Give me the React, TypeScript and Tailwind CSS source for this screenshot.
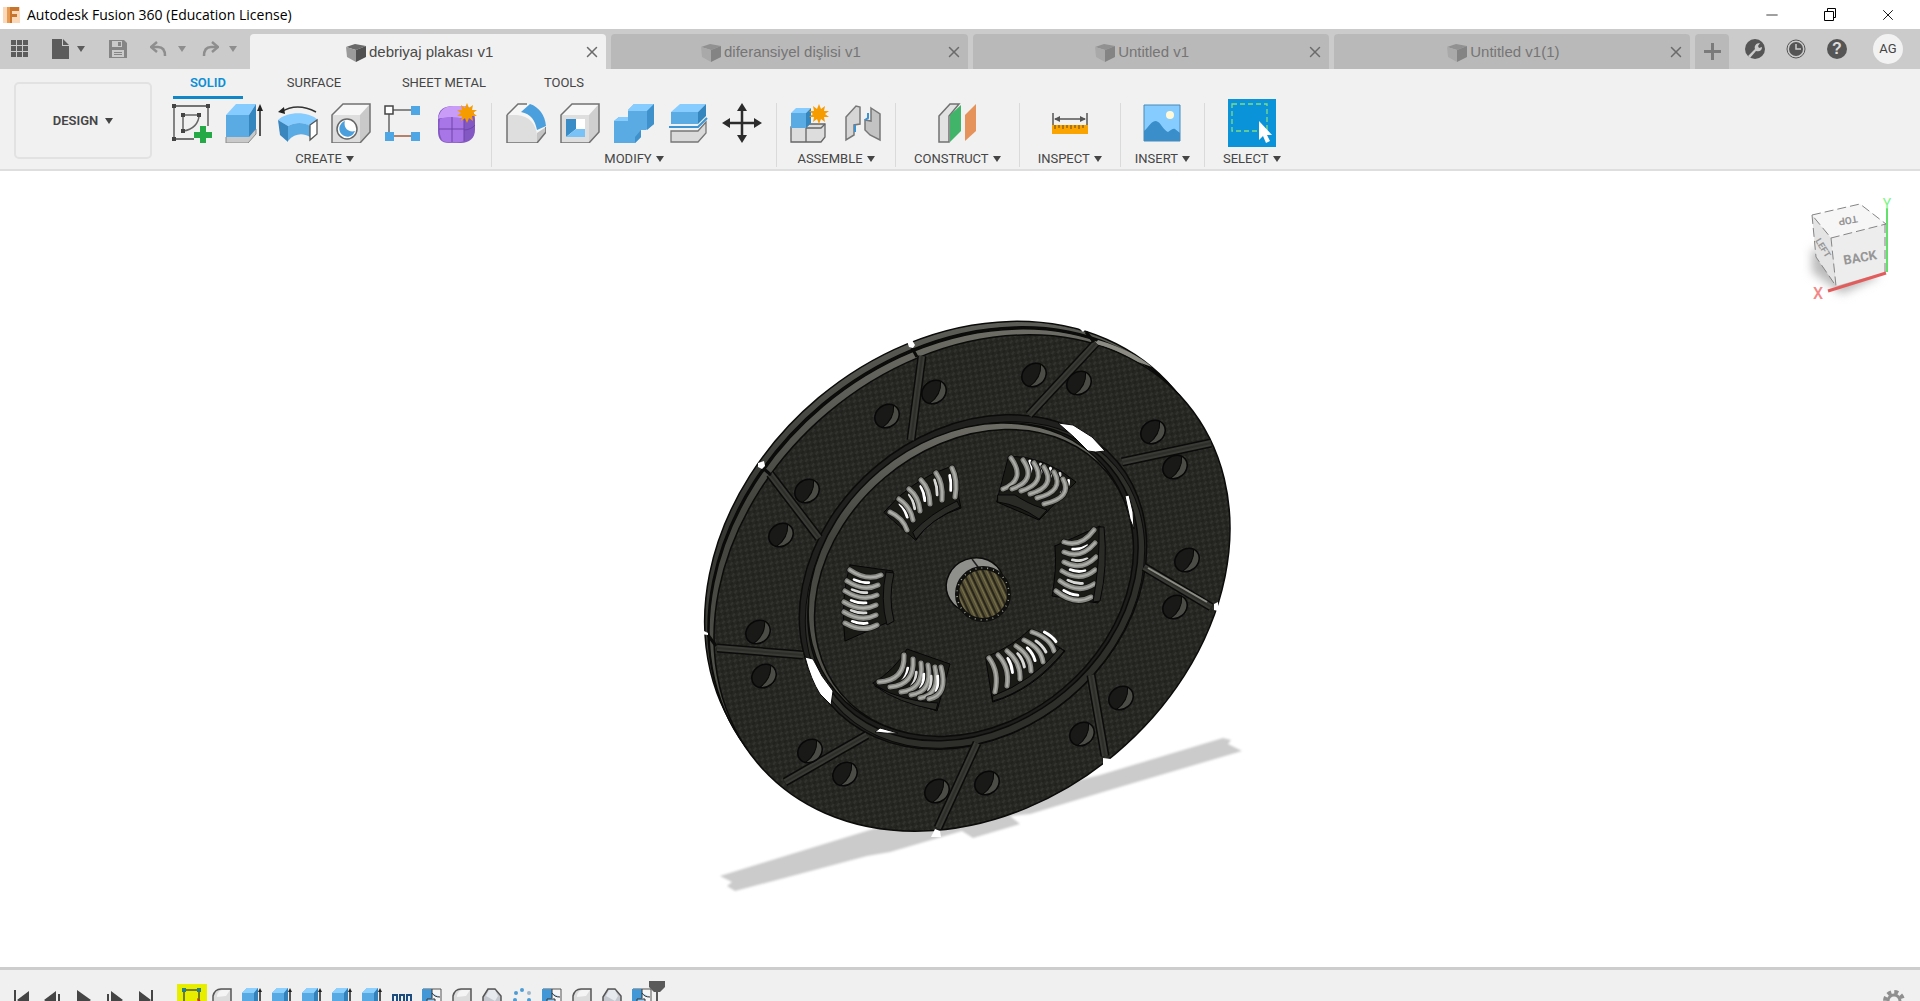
import type { ReactNode } from 'react';
import { Minus, X } from 'lucide-react';

type Point = [number, number];

const documents = [
  { name: 'debriyaj plakası v1', active: true },
  { name: 'diferansiyel dişlisi v1', active: false },
  { name: 'Untitled v1', active: false },
  { name: 'Untitled v1(1)', active: false },
];

const workspaces = [
  { name: 'SOLID', className: 'w-[70px] text-[#0b8fd6] font-semibold border-[#1287c8]' },
  { name: 'SURFACE', className: 'w-[70px] ml-[36px] border-transparent' },
  { name: 'SHEET METAL', className: 'w-[100px] ml-[45px] border-transparent' },
  { name: 'TOOLS', className: 'w-[60px] ml-[40px] border-transparent' },
];

const Caret = ({ className = '' }: { className?: string }) => (
  <svg viewBox="0 0 8 6" className={`w-2 h-[6px] shrink-0 ${className}`}>
    <path d="M0 0h8L4 6z" fill="currentColor" />
  </svg>
);

const Icon = ({ children }: { children: ReactNode }) => (
  <svg viewBox="0 0 40 40" className="w-10 h-10" fill="none">
    {children}
  </svg>
);

const Star = () => (
  <path
    d="M10 0l2 5 4-3-1 5 5 0-4 3 4 3-5 0 1 5-4-3-2 5-2-5-4 3 1-5-5 0 4-3-4-3 5 0-1-5 4 3z"
    fill="#f79c00"
  />
);

const SketchIcon = () => (
  <Icon>
    <path d="M2 3h32M2 3v33M36 3v20M2 36h20" stroke="#4a4a4a" strokeWidth="1.3" />
    <path d="M11 12v16M11 12h16M27 12c0 8-6 15-16 16" stroke="#666" strokeWidth="1.5" />
    <path d="M0 1h4v4H0zM34 1h4v4h-4zM0 34h4v4H0zM9 10h4v4H9zM25 10h4v4h-4zM9 26h4v4H9z" fill="#444" />
    <path d="M28 23h6v6h6v6h-6v6h-6v-6h-6v-6h6z" fill="#25a846" />
  </Icon>
);

const ExtrudeIcon = () => (
  <Icon>
    <path d="M1 34l9-8h21v5l-8 9H1z" fill="#c9c9c9" stroke="#8a8a8a" />
    <path d="M1 12h23v22H1z" fill="#5aaae4" />
    <path d="M1 12L11 1h20l-7 11z" fill="#87ccff" />
    <path d="M24 12l7-11v25l-7 8z" fill="#3585bf" />
    <path d="M35 33V6" stroke="#222" strokeWidth="1.5" />
    <path d="M32 8l3-7 3 7z" fill="#222" />
  </Icon>
);

const RevolveIcon = () => (
  <Icon>
    <path d="M3 9Q19-1 38 9" stroke="#333" strokeWidth="1.5" />
    <path d="M0 9l6-5 1 7z" fill="#222" />
    <path d="M0 17C9 8 31 8 40 17l-9 6c-5-4-14-4-21 0z" fill="#87ccff" />
    <path d="M0 17l10 6v16L2 32z" fill="#3985bd" />
    <path d="M10 23c7-4 16-4 22 0v11c-7-4-15-4-22 4z" fill="#5aaae4" />
    <path d="M32 22l7-5v14l-7 6z" fill="#fff" stroke="#555" strokeWidth="1.3" />
  </Icon>
);

const HoleIcon = () => (
  <Icon>
    <path d="M1 12L12 1h27L29 12z" fill="#f7f7f7" />
    <path d="M29 12L39 1v28L29 40z" fill="#c9c9c9" />
    <path d="M1 12h28v28H1z" fill="#dedede" />
    <path d="M1 12L12 1h27v28L29 40H1z" stroke="#717171" strokeWidth="1.5" />
    <circle cx="16" cy="26" r="10" fill="#fff" stroke="#666" strokeWidth="1.5" />
    <path d="M14 18a8 8 0 1 0 10 10c-7 2-12-4-10-10z" fill="#4a9fdc" />
  </Icon>
);

const PatternIcon = () => (
  <Icon>
    <path d="M5 7v24M5 7h26" stroke="#666" strokeWidth="1.5" />
    <path d="M5 33h26" stroke="#a25b3c" strokeWidth="1.5" />
    <path d="M1 3h8v8H1z" fill="#fff" stroke="#444" strokeWidth="1.5" />
    <path d="M27 3h9v9h-9zM1 29h9v9H1zM27 29h9v9h-9z" fill="#4fa6e4" />
  </Icon>
);

const FormIcon = () => (
  <Icon>
    <path d="M1 16C1 6 8 3 16 3h12c7 1 10 7 10 14v10c0 8-6 13-14 13H12C4 40 1 36 1 28z" fill="#8458c2" />
    <path d="M1 16C3 6 9 3 16 3h12c5 1 8 4 9 7-3 3-7 5-11 5H7c-3 0-5 0-6 1z" fill="#c99cf8" />
    <path d="M3 16c7-3 17-2 24 0v22c-5 2-16 2-21 0-4-4-4-15-3-22z" fill="#a876e6" />
    <path d="M15 14v25M2 26h25M27 16v22M27 27c4 0 9-2 11-5" stroke="#6d45a8" />
    <g transform="translate(20 0)">
      <Star />
    </g>
  </Icon>
);

const FilletIcon = () => (
  <Icon>
    <path d="M1 12L12 1h9c12 2 19 12 19 26l-9 13H1z" fill="#f6f6f6" />
    <path d="M31 30l9-6v5l-9 11z" fill="#c4c4c4" />
    <path d="M1 12h10c12 1 19 9 20 20v8H1z" fill="#dedede" />
    <path d="M1 12L12 1h9M40 24v5l-9 11H1V12" stroke="#717171" strokeWidth="1.5" />
    <path d="M15 9l9-8c9 3 15 11 16 22l-9 4C29 17 25 11 15 9z" fill="#4a9fdc" />
  </Icon>
);

const ShellIcon = () => (
  <Icon>
    <path d="M1 12L12 1h27L29 12z" fill="#f7f7f7" />
    <path d="M29 12L39 1v28L29 40z" fill="#cfcfcf" />
    <path d="M1 12h28v28H1z" fill="#dedede" />
    <path d="M1 12L12 1h27v28L29 40H1z" stroke="#717171" strokeWidth="1.5" />
    <path d="M6 16h19v18H6z" fill="#fff" />
    <path d="M6 16h10v10L6 34z" fill="#3a8cc6" />
    <path d="M6 34l10-8h9v8z" fill="#78c2f7" />
  </Icon>
);

const CombineIcon = () => (
  <Icon>
    <path d="M0 18l5-4h9V7l6-6h20v20l-8 6h-5v7l-6 6H0z" fill="#5aaae4" />
    <path d="M14 7l6-6h20l-7 7H14zM0 18l5-4h9v4z" fill="#87ccff" />
    <path d="M33 8l7-7v20l-7 6zM21 34l6-7v7l-6 6z" fill="#3f91cc" />
  </Icon>
);

const SplitIcon = () => (
  <Icon>
    <path d="M3 9l9-8h26l-8 8z" fill="#87ccff" />
    <path d="M3 9h27v12H3z" fill="#5aaae4" />
    <path d="M30 9l8-8v12l-8 8z" fill="#3585bf" />
    <path d="M1 24h29l9-9" stroke="#3a93d3" strokeWidth="2" />
    <path d="M3 28h27l8-9v11l-8 9H3z" fill="#dadada" stroke="#777" strokeWidth="1.3" />
  </Icon>
);

const MoveIcon = () => (
  <Icon>
    <path d="M20 5v30M5 20h30" stroke="#2b2b2b" strokeWidth="2.5" />
    <path d="M15 8l5-8 5 8zM15 32l5 8 5-8zM8 15l-8 5 8 5zM32 15l8 5-8 5z" fill="#2b2b2b" />
  </Icon>
);

const ComponentIcon = () => (
  <Icon>
    <path d="M2 24h15l3-3h16v13l-4 5H2z" fill="#ddd" stroke="#666" strokeWidth="1.3" />
    <path d="M17 25v14M17 25h15l4-4" stroke="#666" strokeWidth="1.3" />
    <path d="M2 10h15v15H2z" fill="#5aaae4" />
    <path d="M2 10l5-5h15l-5 5z" fill="#87ccff" />
    <path d="M17 10l5-5v15l-5 5z" fill="#3585bf" />
    <g transform="translate(20 1)">
      <Star />
    </g>
  </Icon>
);

const JointIcon = () => (
  <Icon>
    <path d="M3 14L13 3l4 1v17l-6 1v10l-8 5z" fill="#d6d6d6" stroke="#777" strokeWidth="1.5" />
    <path d="M28 5l9 6v26l-10-5-5-5V17l6 1z" fill="#c3c3c3" stroke="#777" strokeWidth="1.5" />
    <path d="M12 22v7M22 17l3-2v-5" stroke="#3a93d3" strokeWidth="2" />
  </Icon>
);

const PlaneIcon = () => (
  <Icon>
    <path d="M2 13L13 1h9L12 13v26H2z" fill="#e2e2e2" stroke="#717171" strokeWidth="1.5" />
    <path d="M13 12L24 2v26L13 39z" fill="#41b469" />
    <path d="M28 12L39 1v27L28 38z" fill="#e5925b" />
  </Icon>
);

const MeasureIcon = () => (
  <Icon>
    <path d="M3 10v12M37 10v12M5 16h30" stroke="#555" strokeWidth="1.5" />
    <path d="M4 16l6-3v6zM36 16l-6-3v6z" fill="#555" />
    <path d="M2 22h36v9H2z" fill="#f9a400" />
    <path d="M5 22v4M9 22v3M13 22v4M17 22v3M21 22v4M25 22v3M29 22v4M33 22v3" stroke="#6b4700" />
  </Icon>
);

const InsertIcon = () => (
  <Icon>
    <path d="M2 2h36v36H2z" fill="#87ccff" />
    <circle cx="28" cy="12" r="4" fill="#fff9d8" />
    <path d="M2 28c5-4 7-10 12-10 5 1 7 9 12 11 3-2 5-4 7-3l5 4v8H2z" fill="#3a8fcb" />
    <path d="M2 2h36v36H2z" stroke="#4689ba" />
  </Icon>
);

const SelectIcon = () => (
  <svg viewBox="0 0 48 48" className="w-12 h-12 -my-1" fill="none">
    <path d="M0 0h48v48H0z" fill="#0a93d9" />
    <path d="M4 5h35v27H4z" stroke="#80dc84" strokeWidth="1.3" strokeDasharray="5 3" />
    <path d="M31 22v19l4-4 3 7 4-2-3-6h5z" fill="#fff" />
  </svg>
);

const groups = [
  { name: 'CREATE', className: 'px-[14px] gap-[13px]', icons: [SketchIcon, ExtrudeIcon, RevolveIcon, HoleIcon, PatternIcon, FormIcon] },
  { name: 'MODIFY', className: 'px-[14px] gap-[14px]', icons: [FilletIcon, ShellIcon, CombineIcon, SplitIcon, MoveIcon] },
  { name: 'ASSEMBLE', className: 'px-[12px] gap-[14px]', icons: [ComponentIcon, JointIcon] },
  { name: 'CONSTRUCT', className: 'px-[18px]', icons: [PlaneIcon] },
  { name: 'INSPECT', className: 'px-[18px]', icons: [MeasureIcon] },
  { name: 'INSERT', className: 'px-[18px]', icons: [InsertIcon] },
  { name: 'SELECT', className: 'px-[18px]', icons: [SelectIcon] },
];

const CubeIcon = () => (
  <svg viewBox="0 0 20 20" className="w-5 h-5 shrink-0">
    <path d="M0 4l9-3 11 2-10 4z" fill="#6a6a6a" />
    <path d="M0 4l10 3v12L1 14z" fill="#9a9a9a" />
    <path d="M10 7l10-4v11l-10 5z" fill="#505050" />
  </svg>
);

const TitleBar = () => (
  <header className="flex items-center h-[29px] bg-white shrink-0">
    <svg viewBox="0 0 18 18" className="w-[18px] h-[18px] ml-[3px]">
      <path d="M0 1h17v16H0z" fill="#fbd9b8" />
      <path d="M4 1h12v4H9v3h5v3H9v6H4z" fill="#c9742d" />
      <path d="M4 1h3v16H4z" fill="#e69a52" />
    </svg>
    <h1 className="ml-[6px] font-['Open_Sans','Noto_Sans',sans-serif] text-[14px] leading-5 text-black">Autodesk Fusion 360 (Education License)</h1>
    <div className="ml-auto flex items-center gap-[41px] pr-[23px] text-black">
      <button aria-label="Minimize"><Minus className="w-[18px] h-[18px]" strokeWidth={1} /></button>
      <button aria-label="Restore">
        <svg viewBox="0 0 16 16" className="w-4 h-4" fill="none" stroke="currentColor">
          <path d="M2.500 4.500h9v9h-9zM5.500 4.500v-3h8v9h-2" />
        </svg>
      </button>
      <button aria-label="Close"><X className="w-[18px] h-[18px]" strokeWidth={1.2} /></button>
    </div>
  </header>
);

const QuickAccess = () => (
  <div className="flex items-center w-[250px] shrink-0 h-full pl-[11px] text-[#5c5c5c]">
    <button aria-label="Data panel">
      <svg viewBox="0 0 18 18" className="w-[18px] h-[18px]" fill="currentColor">
        <path d="M0 0h5v5H0zM6 0h5v5H6zM12 0h5v5h-5zM0 6h5v5H0zM6 6h5v5H6zM12 6h5v5h-5zM0 12h5v5H0zM6 12h5v5H6zM12 12h5v5h-5z" />
      </svg>
    </button>
    <button aria-label="File" className="flex items-center gap-2 ml-[23px]">
      <svg viewBox="0 0 17 20" className="w-[17px] h-5" fill="currentColor">
        <path d="M0 0h10v7h7v13H0zM11 0l6 6h-6z" />
      </svg>
      <Caret />
    </button>
    <button aria-label="Save" className="ml-[24px] text-[#858585]">
      <svg viewBox="0 0 18 18" className="w-[18px] h-[18px]">
        <path d="M0 0h15l3 3v15H0z" fill="currentColor" />
        <path d="M3 1h10v6H3zM3 10h12v7H3z" fill="#cbcbcb" />
        <path d="M9 2h3v4H9zM5 12h8v1H5zM5 14h8v1H5z" fill="currentColor" />
      </svg>
    </button>
    <button aria-label="Undo" className="flex items-center gap-[11px] ml-[23px] text-[#8e8e8e]">
      <svg viewBox="0 0 17 16" className="w-[17px] h-4" fill="none">
        <path d="M2 6h6c5 0 7 3 7 9" stroke="currentColor" strokeWidth="2.500" />
        <path d="M7 1L1 6l6 5" stroke="currentColor" strokeWidth="2.500" />
      </svg>
      <Caret />
    </button>
    <button aria-label="Redo" className="flex items-center gap-[10px] ml-[16px] text-[#8e8e8e]">
      <svg viewBox="0 0 17 16" className="w-[17px] h-4" fill="none">
        <path d="M15 6H9c-5 0-7 3-7 9" stroke="currentColor" strokeWidth="2.500" />
        <path d="M10 1l6 5-6 5" stroke="currentColor" strokeWidth="2.500" />
      </svg>
      <Caret />
    </button>
  </div>
);

const TabBar = () => (
  <nav className="flex items-end h-10 bg-[#cbcbcb] shrink-0">
    <QuickAccess />
    <div className="flex flex-1 gap-[5px] h-[35px]">
      {documents.map((doc) => (
        <div
          key={doc.name}
          className={`flex flex-1 items-center rounded-t-[4px] text-[15px] ${doc.active ? 'bg-[#f1f1f1] text-[#4a4a4a]' : 'bg-[#b9b9b9] text-[#757575]'}`}
        >
          <button className="flex flex-1 items-center justify-center gap-[3px] pl-[6px] pt-[2px]">
            <span className={doc.active ? '' : 'opacity-50'}><CubeIcon /></span>
            {doc.name}
          </button>
          <button aria-label={`Close ${doc.name}`} className="pr-[5px] text-[#6b6b6b]">
            <X className="w-[18px] h-[18px]" strokeWidth={2} />
          </button>
        </div>
      ))}
      <button aria-label="New tab" className="flex items-center justify-center w-[34px] rounded-t-[4px] bg-[#b9b9b9]">
        <svg viewBox="0 0 17 17" className="w-[17px] h-[17px]"><path d="M7 0h3v7h7v3h-7v7H7v-7H0V7h7z" fill="#7b7b7b" /></svg>
      </button>
    </div>
    <div className="flex items-center h-full w-[191px] shrink-0 pl-[16px] text-[#555]">
      <button aria-label="Extensions">
        <svg viewBox="0 0 20 20" className="w-5 h-5">
          <circle cx="10" cy="10" r="10" fill="currentColor" />
          <path d="M3 17l7-7c-1-3 1-6 5-6l-2 3 1 2 3-1c0 4-3 5-6 4l-6 7z" fill="#cbcbcb" />
        </svg>
      </button>
      <button aria-label="Job status" className="ml-[21px]">
        <svg viewBox="0 0 20 20" className="w-5 h-5">
          <circle cx="10" cy="10" r="9" fill="none" stroke="currentColor" />
          <circle cx="10" cy="10" r="7" fill="currentColor" />
          <path d="M10 5v5h5" fill="none" stroke="#cbcbcb" strokeWidth="1.500" />
        </svg>
      </button>
      <button aria-label="Help" className="ml-[21px] flex items-center justify-center w-5 h-5 rounded-full bg-[#555] text-[#ddd] text-[16px] leading-5 font-bold">?</button>
      <button className="ml-[26px] flex items-center justify-center w-[30px] h-[30px] rounded-full bg-[#f2f2f2] font-['Roboto',sans-serif] text-[13px] text-[#444]">AG</button>
    </div>
  </nav>
);

const Toolbar = () => (
  <section className="flex shrink-0 h-[102px] bg-[#f1f1f1] border-b-2 border-[#dedede] font-['Roboto','Liberation_Sans',sans-serif] text-[13px] leading-4 text-[#454545]">
    <button className="flex items-center justify-center gap-[7px] w-[138px] h-[77px] ml-[14px] mt-[13px] border-2 border-[#e2e2e2] rounded-[5px] font-semibold">
      DESIGN <Caret />
    </button>
    <div className="ml-[6px]">
      <div className="flex h-[30px] pl-[15px]">
        {workspaces.map((space) => (
          <button key={space.name} className={`h-[30px] border-b-3 ${space.className}`}>{space.name}</button>
        ))}
      </div>
      <div className="flex pt-[4px]">
        {groups.map((group) => (
          <div key={group.name} className="flex flex-col items-center h-[64px] border-r border-[#dadada] last:border-0">
            <div className={`flex ${group.className}`}>
              {group.icons.map((Drawing, index) => (
                <button key={index} aria-label={`${group.name} ${index + 1}`}><Drawing /></button>
              ))}
            </div>
            <button className={`flex items-center gap-1 mt-[8px] ${group.name === 'INSERT' ? 'px-[14px]' : 'px-[18px]'}`}>{group.name} <Caret /></button>
          </div>
        ))}
      </div>
    </div>
  </section>
);

const holes: Point[] = [
  [887, 417], [934, 393], [807, 492], [781, 536], [1034, 376], [1079, 384],
  [1153, 433], [1175, 468], [1187, 561], [758, 633], [764, 677], [810, 752],
  [845, 775], [937, 792], [987, 784], [1082, 735], [1121, 699], [1175, 608],
];

const slots: [Point, Point][] = [
  [[922, 357], [911, 441]],
  [[770, 475], [819, 539]],
  [[717, 649], [803, 656]],
  [[785, 783], [867, 736]],
  [[938, 829], [977, 744]],
  [[1105, 757], [1091, 676]],
  [[1211, 608], [1144, 568]],
  [[1211, 444], [1122, 463]],
  [[1096, 344], [1029, 416]],
];

const notches = [
  'M907 342l5-1 3 5-2 3-4-1z',
  'M758 464l6-2 1 5-3 3-4-2z',
  'M700 630l8 4v2l-8-1z',
  'M1079 329l8 0-4 4z',
  'M1218 603l-4 2 0 6 4 1z',
  'M1103 766l0-7 8 1-4 8z',
  'M931 838l4-8 5 2 1 6z',
];

const windows = [
  'M1058 424l15 2 19 12 13 14q-10 2-17 0-12-13-30-28z',
  'M1125 497l4-1 4 17 1 17-4-10z',
  'M805 658l8 2 9 17 11 15-2 14-11-11q-9-14-15-37z',
  'M880 729l18 5q-10 1-23-1z',
];

const springs: { box: string; pad: string; first: [Point, Point]; last: [Point, Point]; bow: Point; arch: Point; gap: Point }[] = [
  { box: 'M884 513Q912 480 952 467L961 509Q930 519 916 541z', pad: 'M913 533Q931 514 957 502L960 508Q931 520 916 540z', first: [[890, 513], [907, 531]], last: [[952, 469], [955, 498]], bow: [3, -2], arch: [-6, -6], gap: [-5, 0] },
  { box: 'M1009 457Q1045 457 1076 483L1039 521 997 503z', pad: 'M998 496l17 0q14 9 24 12l8 3-8 9q-20-14-41-17z', first: [[1011, 459], [1003, 490]], last: [[1063, 480], [1044, 505]], bow: [13, 4], arch: [2, -4], gap: [3, -6] },
  { box: 'M1055 547L1100 527Q1107 565 1098 604L1052 597Q1057 570 1055 547z', pad: 'M1099 528l5 0q4 40-4 74l-7 1q7-38 6-75z', first: [[1064, 543], [1094, 531]], last: [[1056, 592], [1091, 598]], bow: [1, 8], arch: [3, 0], gap: [1, -5] },
  { box: 'M986 658Q1015 646 1030 630L1065 652Q1035 690 993 703z', pad: 'M993 697q40-15 67-48l4 3q-32 39-71 50z', first: [[989, 659], [995, 693]], last: [[1032, 633], [1054, 652]], bow: [5, -2], arch: [1, 4], gap: [5, -3] },
  { box: 'M873 684Q894 672 907 650L950 665 937 712 897 699z', pad: 'M875 687q30 16 63 17l-2 7q-38-7-61-24z', first: [[904, 656], [879, 683]], last: [[941, 668], [929, 700]], bow: [9, 8], arch: [2, 3], gap: [-5, 1] },
  { box: 'M850 566L893 572Q886 600 893 621L845 642Q840 600 850 566z', pad: 'M886 573l8 1q-6 25 0 48l-7 4q-7-26-1-53z', first: [[850, 571], [881, 576]], last: [[845, 624], [877, 626]], bow: [1, 6], arch: [-3, 0], gap: [0, -5] },
];

const Spring = ({ box, pad, first, last, bow, arch, gap }: (typeof springs)[number]) => {
  const coils = Array.from({ length: 6 }, (_, i) => {
    const t = i / 5;
    const lift = 4 * t * (1 - t);
    const at = (end: 0 | 1, axis: 0 | 1) => Math.round(first[end][axis] + (last[end][axis] - first[end][axis]) * t + arch[axis] * lift);
    const [x1, y1, x2, y2] = [at(0, 0), at(0, 1), at(1, 0), at(1, 1)];
    return `M${x1} ${y1}Q${(x1 + x2) / 2 + bow[0] * 1.5} ${(y1 + y2) / 2 + bow[1] * 1.5} ${x2} ${y2}`;
  });
  return (
    <g fill="none" strokeLinecap="round">
      <path d={box} fill="#1a1a17" stroke="#060606" />
      {coils.map((d, i) => (
        <g key={d}>
          {i > 0 && (
            <path d={d} stroke={i % 2 ? '#ffffff' : '#d8d8d6'} strokeWidth="3" strokeDasharray="15 40" strokeDashoffset="-8" transform={`translate(${gap[0]} ${gap[1]})`} />
          )}
          <path d={d} stroke="#161614" strokeWidth="7" />
          <path d={d} stroke="#868682" strokeWidth="5" />
          <path d={d} stroke="#adada9" strokeWidth="2" />
        </g>
      ))}
      <path d={pad} fill="#2a2a27" stroke="#080808" />
    </g>
  );
};

const ClutchPlate = () => (
  <svg viewBox="675 240 570 660" className="w-[570px] h-[660px]">
    <defs>
      <pattern id="weave" width="8" height="8" patternUnits="userSpaceOnUse" patternTransform="rotate(-14)">
        <path d="M0 0h8v8H0z" fill="#262623" />
        <path d="M0 1h4v2H0zM4 5h4v2H4z" fill="#31312d" />
        <path d="M4 1h4v2H4zM0 5h4v2H0z" fill="#21211e" />
      </pattern>
      <linearGradient id="rim" x1="0" y1="1" x2="1" y2="0">
        <stop offset="0" stopColor="#6c6c65" />
        <stop offset="0.300" stopColor="#54544d" />
        <stop offset="0.600" stopColor="#43433e" />
        <stop offset="1" stopColor="#85857d" />
      </linearGradient>
      <linearGradient id="backRim" x1="0" y1="1" x2="1" y2="0">
        <stop offset="0" stopColor="#5c5c55" />
        <stop offset="0.400" stopColor="#3e3e3a" />
        <stop offset="0.600" stopColor="#353532" />
        <stop offset="1" stopColor="#74746c" />
      </linearGradient>
      <pattern id="spline" width="6" height="6" patternUnits="userSpaceOnUse" patternTransform="rotate(-25)">
        <path d="M0 0h6v6H0z" fill="#575135" />
        <path d="M0 0h2v6H0z" fill="#28251a" />
        <path d="M4 0h1v6H4z" fill="#777049" />
      </pattern>
      <filter id="soft"><feGaussianBlur stdDeviation="1" /></filter>
    </defs>
    <path
      d="M720 877L873 830 1100 776 1223 739 1231 741 1228 745 1242 752 1113 790 1030 815 1010 817 1020 825 973 839 962 832 890 853 867 857 735 892 727 887 732 883z"
      fill="#cbcbcb"
      filter="url(#soft)"
    />
    <g stroke="#0b0b0a" strokeWidth="1.500">
      <ellipse rx="278" ry="222" transform="translate(961 569) rotate(-40)" fill="url(#backRim)" />
      <ellipse rx="279" ry="222" transform="translate(965 575) rotate(-40)" fill="#0f0f0e" />
      <ellipse rx="279" ry="222" transform="translate(966 577) rotate(-40)" fill="url(#rim)" />
      <ellipse rx="280" ry="223" transform="translate(972 584) rotate(-40)" fill="url(#weave)" />
    </g>
    <path d="M1098 341Q1132 351 1152 368L1138 363Q1112 348 1095 345z" fill="#8c8c84" />
    <g stroke="#0b0b0a">
      <ellipse rx="188" ry="151" transform="translate(973 583) rotate(-40)" fill="#20201e" strokeWidth="1.500" />
      <ellipse rx="184" ry="147" transform="translate(975 586) rotate(-40)" fill="#2e2e2b" strokeWidth="1" />
      <ellipse rx="179" ry="143" transform="translate(973 583) rotate(-40)" fill="#1e1e1c" strokeWidth="1.500" />
      <ellipse rx="175" ry="141" transform="translate(970 580) rotate(-40)" fill="url(#rim)" strokeWidth="1.500" />
      <ellipse rx="173" ry="138" transform="translate(974 584) rotate(-40)" fill="url(#weave)" strokeWidth="1.500" />
    </g>
    {windows.map((d) => (
      <path key={d} d={d} fill="#fff" stroke="#0b0b0a" />
    ))}
    {slots.map(([a, b]) => (
      <g key={a.join()}>
        <path d={`M${a.join(' ')}L${b.join(' ')}`} stroke="#0b0b0a" strokeWidth="9" />
        <path d={`M${a.join(' ')}L${b.join(' ')}`} stroke="#393935" strokeWidth="6" />
        <path d={`M${a.join(' ')}L${b.join(' ')}`} stroke="#2e2e2a" strokeWidth="2" />
      </g>
    ))}
    <path d="M1207 603l-59-34" stroke="#8d8d86" strokeWidth="2" />
    <path d="M912 349l5 9M764 470l7 6M708 636l8 11M1086 333l8 10" stroke="#0b0b0a" strokeWidth="3" />
    {notches.map((d) => (
      <path key={d} d={d} fill="#fff" />
    ))}
    {holes.map(([x, y]) => (
      <g key={`${x}-${y}`} transform={`translate(${x} ${y}) rotate(-40)`}>
        <ellipse rx="13" ry="11" fill="#191917" />
        <path d="M12 -4A13 11 0 0 1-11 6Q4 7 12-4z" fill="#4c4c46" />
        <path d="M12 -4Q4 7-11 6" fill="none" stroke="#080808" />
        <ellipse rx="13" ry="11" fill="none" stroke="#080808" strokeWidth="1.500" />
      </g>
    ))}
    {springs.map((spring) => (
      <Spring key={spring.box} {...spring} />
    ))}
    <ellipse cx="975" cy="586" rx="29" ry="27" fill="#8f8f8c" stroke="#0b0b0a" strokeWidth="1.500" transform="rotate(-20 975 586)" />
    <path d="M972 560l6 8" stroke="#222" strokeWidth="1.500" />
    <ellipse cx="983" cy="595" rx="26" ry="26" fill="url(#spline)" stroke="#10100e" strokeWidth="4" />
    <ellipse cx="983" cy="595" rx="26" ry="26" fill="none" stroke="#a09f94" strokeWidth="1.500" strokeDasharray="1 5" />
  </svg>
);

const ViewCube = () => (
  <svg viewBox="1790 190 120 120" className="absolute right-[10px] top-[19px] w-[120px] h-[120px]">
    <defs>
      <filter id="shade" x="-0.300" y="-0.300" width="1.600" height="1.600"><feGaussianBlur stdDeviation="5" /></filter>
    </defs>
    <path d="M1812 248L1880 276 1842 294 1812 272z" fill="#bbb" filter="url(#shade)" />
    <path d="M1812 215l48-11 26 20-55 14z" fill="#f6f6f6" />
    <path d="M1812 215l19 23 5 48-20-29z" fill="#e4e4e4" />
    <path d="M1831 238l55-14v48l-50 14z" fill="#ededed" />
    <path d="M1812 215l48-11 26 20-55 14zM1812 215l4 42 20 29-5-48M1885 224v48" fill="none" stroke="#858585" strokeDasharray="9 4" />
    <path d="M1887 208v64" stroke="#62e26c" strokeWidth="2" />
    <path d="M1886 273l-58 18" stroke="#e25c5c" strokeWidth="3" />
    <g fontFamily="Roboto, sans-serif" fontWeight="700" textAnchor="middle">
      <text x="1860" y="262" fontSize="13" fill="#969696" transform="rotate(-10 1860 257)">BACK</text>
      <text x="1848" y="223" fontSize="10" fill="#969696" transform="rotate(170 1848 220)">TOP</text>
      <text x="1823" y="251" fontSize="9" fill="#969696" transform="rotate(58 1823 248)">LEFT</text>
      <text x="1887" y="209" fontSize="14" fontWeight="400" fill="#7df584">Y</text>
      <text x="1818" y="299" fontSize="16" fontWeight="500" fill="#f48787">X</text>
    </g>
  </svg>
);

const StepIcon = ({ kind }: { kind: string }) => {
  switch (kind) {
    case 'sketch':
      return (
        <svg viewBox="0 0 30 30" className="w-[30px] h-[30px]">
          <path d="M0 0h30v30H0z" fill="#e7ee00" />
          <path d="M7 6h15M7 6v20M22 6v20" stroke="#4c5a22" strokeWidth="1.500" />
          <path d="M5 4h4v4H5zM20 4h4v4h-4z" fill="#297f87" />
          <path d="M20 14l5 4-4 2z" fill="#e02b1d" />
        </svg>
      );
    case 'extrude':
      return (
        <svg viewBox="0 0 20 20" className="w-5 h-5">
          <path d="M0 5l5-5h11v20H0z" fill="#57a9e4" />
          <path d="M0 5l5-5h11l-4 5z" fill="#8bd0ff" />
          <path d="M12 5l4-5v20h-4z" fill="#3480b8" />
          <path d="M18 3v17" stroke="#222" strokeWidth="1.500" />
          <path d="M16 4l2-4 2 4z" fill="#222" />
        </svg>
      );
    case 'pattern':
      return (
        <svg viewBox="0 0 20 20" className="w-5 h-5">
          <path d="M1 7h4v11H1zM8 7h4v11H8zM15 7h4v11h-4z" fill="#eaf3fb" stroke="#1e4c7c" strokeWidth="2" />
        </svg>
      );
    case 'joint':
      return (
        <svg viewBox="0 0 20 20" className="w-5 h-5">
          <path d="M1 1h18v19H1z" fill="#f5f5f5" stroke="#555" />
          <path d="M0 1h10v18H0z" fill="#4297d6" />
          <path d="M10 1v9M10 5c2 3 4 4 8 4M5 11h8v9H5z" stroke="#333" fill="#9ccef3" />
        </svg>
      );
    case 'fillet':
      return (
        <svg viewBox="0 0 20 20" className="w-5 h-5">
          <path d="M1 20V8c1-4 4-7 8-7h10v19z" fill="#dcdcdc" stroke="#555" strokeWidth="1.500" />
          <path d="M5 9c0-4 2-6 5-7h8l-4 6z" fill="#f4f4f4" />
        </svg>
      );
    case 'chamfer':
      return (
        <svg viewBox="0 0 20 20" className="w-5 h-5">
          <path d="M1 20V9l5-8h7l6 7v12z" fill="#c6cad0" stroke="#555" strokeWidth="1.500" />
          <path d="M4 8l3-6h6l3 6-3 5z" fill="#e6e9ee" />
        </svg>
      );
    default:
      return (
        <svg viewBox="0 0 20 20" className="w-5 h-5" fill="#4d9bd4">
          <circle cx="10" cy="2" r="2" />
          <circle cx="4" cy="5" r="2" />
          <circle cx="17" cy="5" r="2" fill="#9db8cc" />
          <circle cx="3" cy="12" r="2" />
          <circle cx="17" cy="12" r="2" />
          <circle cx="10" cy="16" r="2" />
        </svg>
      );
  }
};

const steps = [
  'fillet', 'extrude', 'extrude', 'extrude', 'extrude', 'extrude', 'pattern', 'joint',
  'fillet', 'chamfer', 'circular', 'joint', 'fillet', 'chamfer', 'joint',
];

const playback = [
  { name: 'Go to start', path: 'M1 0h2v20H1zM16 1v18L4 10z' },
  { name: 'Step back', path: 'M12 1v18L0 10zM14 4h2v12h-2z' },
  { name: 'Play', path: 'M2 0l14 10L2 20z' },
  { name: 'Step forward', path: 'M5 1v18l12-9zM1 4h2v12H1z' },
  { name: 'Go to end', path: 'M14 0h2v20h-2zM2 1v18l12-9z' },
];

const Timeline = () => (
  <footer className="flex items-start shrink-0 h-[34px] overflow-hidden border-t-3 border-[#cdcdcd] bg-[#f0f0f0] text-[#454545]">
    <div className="flex gap-[14px] pt-[20px] pl-[13px]">
      {playback.map((control) => (
        <button key={control.name} aria-label={control.name}>
          <svg viewBox="0 0 17 20" className="w-[17px] h-5" fill="currentColor"><path d={control.path} /></svg>
        </button>
      ))}
    </div>
    <button aria-label="Sketch" className="ml-[23px] mt-[14px]"><StepIcon kind="sketch" /></button>
    <div className="flex gap-[10px] pt-[18px] pl-[5px]">
      {steps.map((kind, index) => (
        <button key={index} aria-label={`Step ${index + 1}`}><StepIcon kind={kind} /></button>
      ))}
    </div>
    <svg viewBox="0 0 16 24" className="w-4 h-6 -ml-[3px] mt-[11px]" fill="#5a5a5a">
      <path d="M0 0h16v6l-5 5H9v13H7V11H5L0 6z" />
    </svg>
    <button aria-label="Settings" className="ml-auto mr-[15px] mt-[20px]">
      <svg viewBox="0 0 22 22" className="w-[22px] h-[22px]">
        <circle cx="11" cy="11" r="9" fill="none" stroke="#8f8f8f" strokeWidth="4" strokeDasharray="4 3.070" />
        <circle cx="11" cy="11" r="6" fill="none" stroke="#8f8f8f" strokeWidth="3" />
      </svg>
    </button>
  </footer>
);

export default function App() {
  return (
    <div className="flex flex-col h-screen overflow-hidden bg-white font-['Liberation_Sans',Arial,sans-serif]">
      <TitleBar />
      <TabBar />
      <Toolbar />
      <main className="relative flex flex-1 min-h-0 items-center justify-center bg-white">
        <ClutchPlate />
        <ViewCube />
      </main>
      <Timeline />
    </div>
  );
}
